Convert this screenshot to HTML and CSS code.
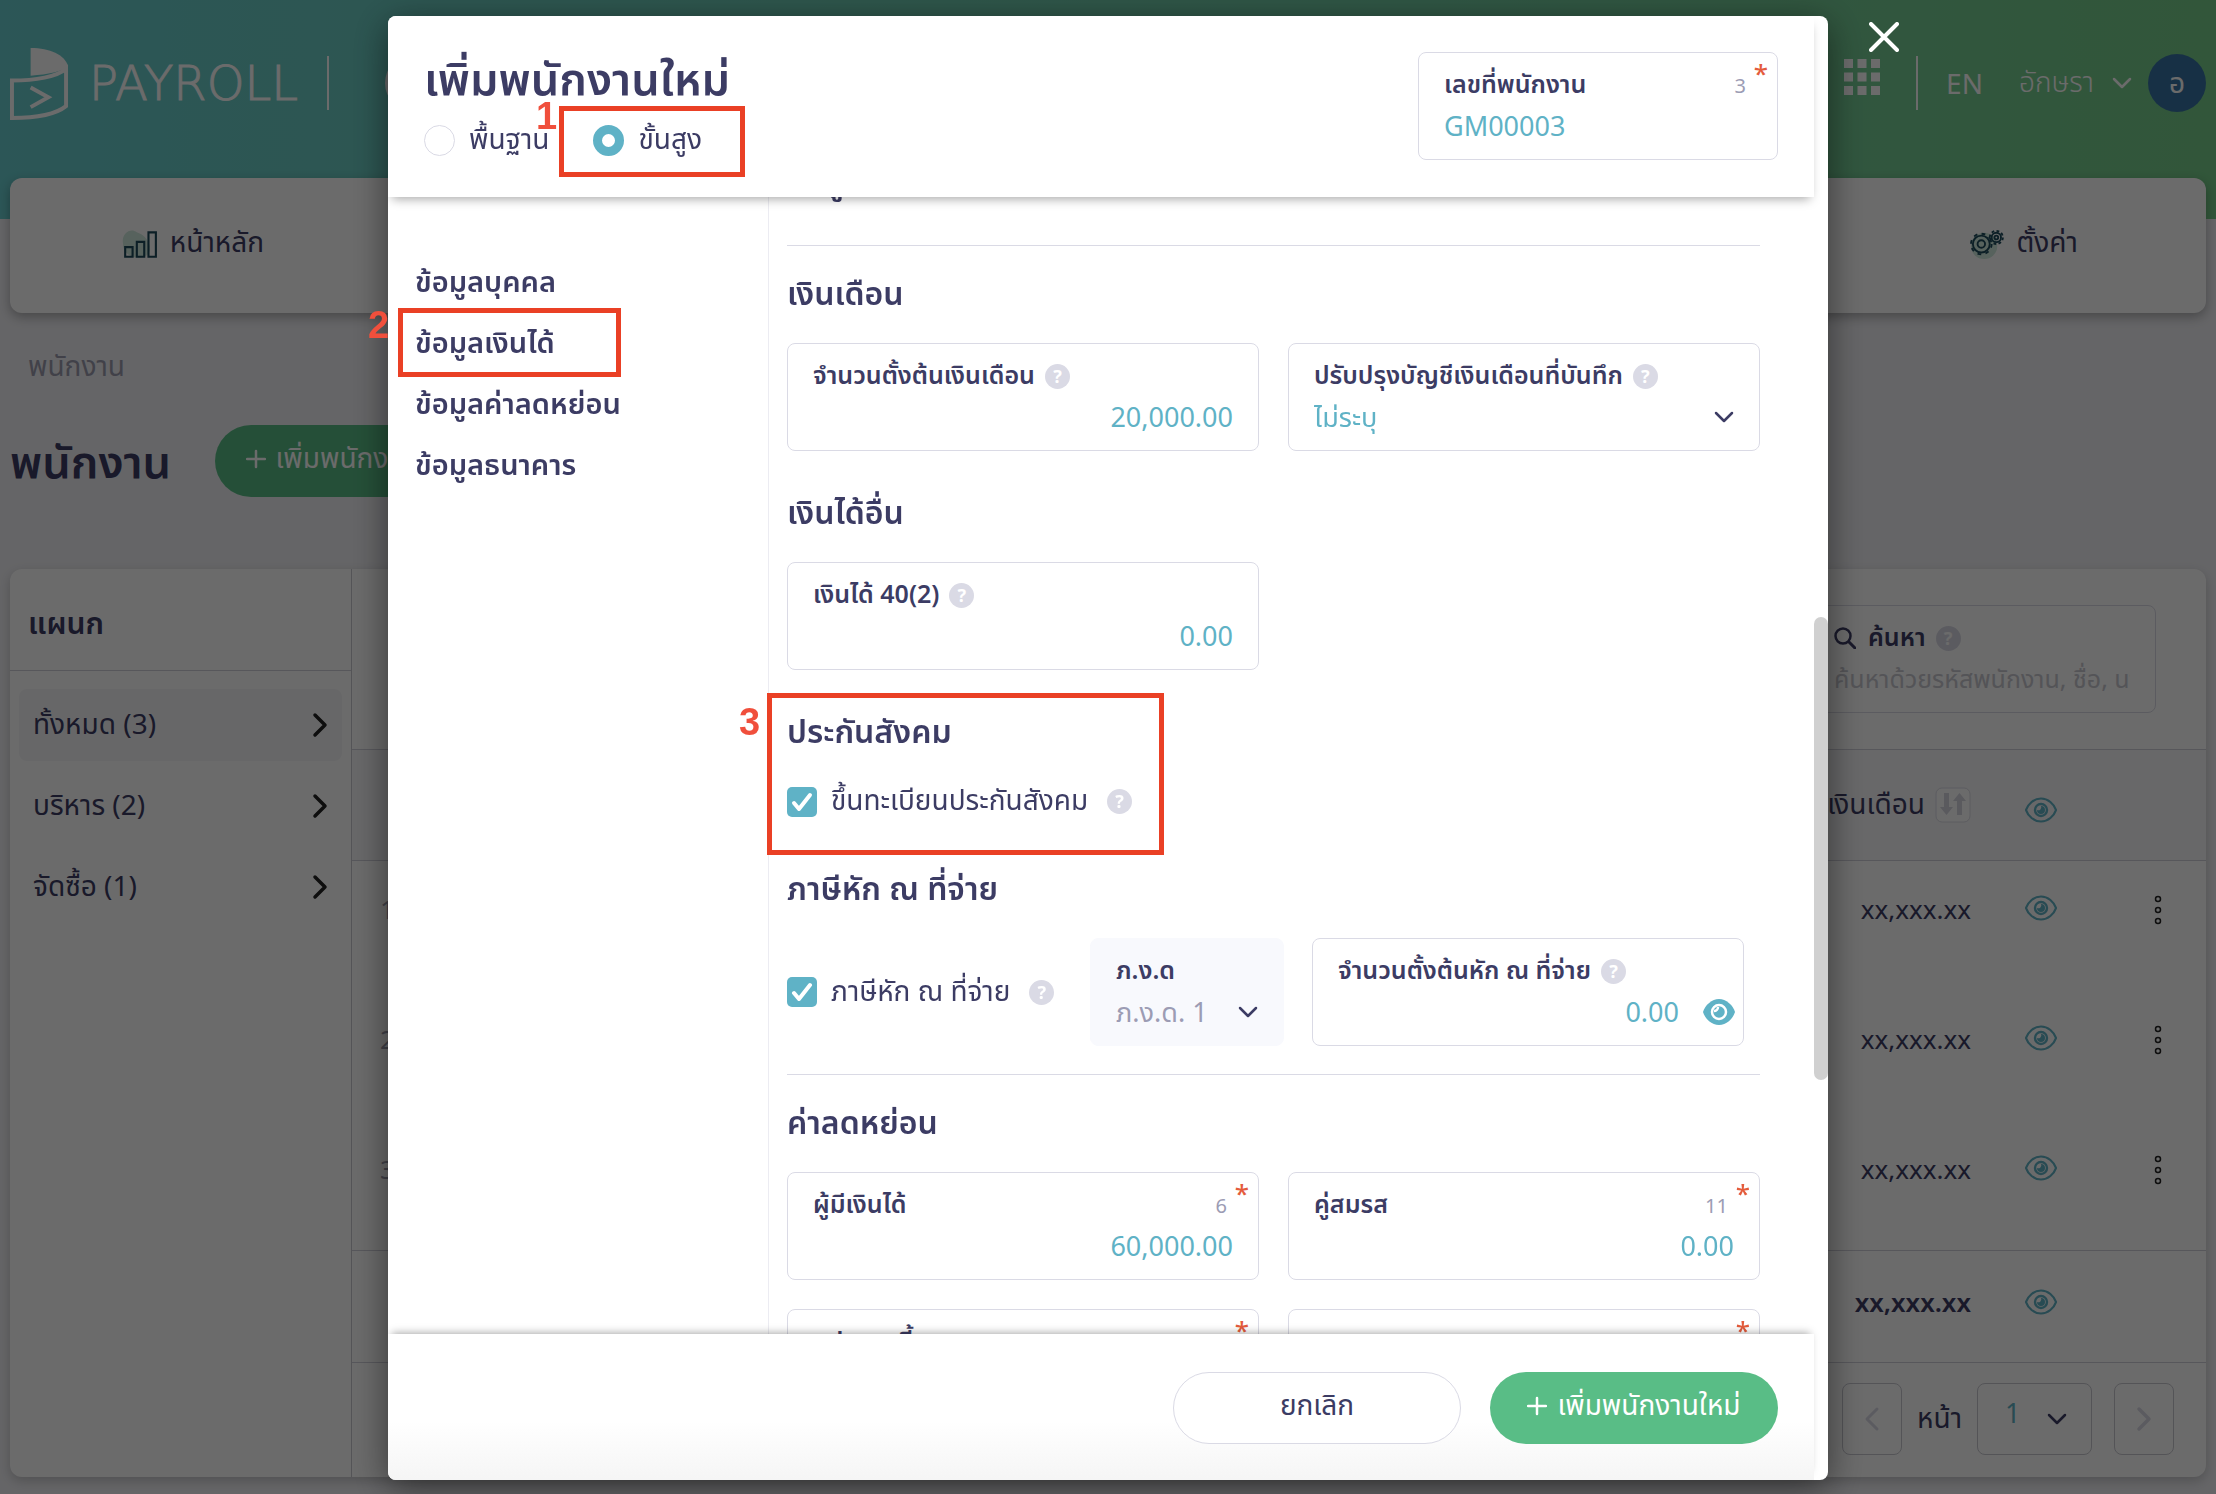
FILE: index.html
```html
<!DOCTYPE html>
<html lang="th">
<head>
    <meta charset="UTF-8">
    <meta name="viewport" content="width=device-width, initial-scale=1.0">
    <title>Payroll</title>
    <link rel="stylesheet" href="styles.css">
</head>
<body>
    <svg class="sprite" aria-hidden="true">
        <symbol id="chevron-down" viewBox="0 0 20 12"><path d="M2 2l8 8 8-8" fill="none" stroke="currentColor" stroke-width="2.500" stroke-linecap="round" stroke-linejoin="round"/></symbol>
        <symbol id="chevron-right" viewBox="0 0 16 26"><path d="M3 3l10 10L3 23" fill="none" stroke="currentColor" stroke-width="3.500" stroke-linecap="round" stroke-linejoin="round"/></symbol>
        <symbol id="chevron-left" viewBox="0 0 16 26"><path d="M13 3L3 13l10 10" fill="none" stroke="currentColor" stroke-width="3" stroke-linecap="round" stroke-linejoin="round"/></symbol>
        <symbol id="plus" viewBox="0 0 20 20"><path d="M10 2v16M1 10h18" fill="none" stroke="currentColor" stroke-width="2.500" stroke-linecap="round"/></symbol>
        <symbol id="eye" viewBox="0 0 32 26">
            <path d="M1 13C3 7 9 1.500 16 1.500S29 7 31 13C29 19 23 24.500 16 24.500S3 19 1 13z" fill="none" stroke="currentColor" stroke-width="2.200" stroke-linejoin="round"/>
            <circle cx="16" cy="13" r="6" fill="none" stroke="currentColor" stroke-width="2.400"/>
            <path d="M16 9a4 4 0 1 1-4 4a3 3 0 0 0 4-4z" fill="currentColor"/>
        </symbol>
        <symbol id="eye-solid" viewBox="0 0 32 26">
            <path d="M0 13C2 6 9 0 16 0S30 6 32 13C30 20 23 26 16 26S2 20 0 13z" fill="currentColor"/>
            <circle cx="16" cy="13" r="7" fill="none" stroke="#fff" stroke-width="2.500"/>
            <path d="M15 8a4 4 0 0 1-4 4" fill="none" stroke="#fff" stroke-width="2.500"/>
        </symbol>
        <symbol id="dots" viewBox="0 0 8 30"><g fill="none" stroke="currentColor" stroke-width="1.500"><circle cx="4" cy="4" r="2.500"/><circle cx="4" cy="15" r="2.500"/><circle cx="4" cy="26" r="2.500"/></g></symbol>
    </svg>

    <header class="topbar">
        <div class="brand">
            <svg class="brand-mark" viewBox="0 0 60 74">
                <path d="M21 1c20 0 34 7 38 18c-6 6-20 9-38 10z" fill="currentColor"/>
                <path d="M2 34c24 0 46-4 55-12v38c-10 8-28 12-55 12z" fill="none" stroke="currentColor" stroke-width="4"/>
                <path d="M21 41l18 10-18 10" fill="none" stroke="currentColor" stroke-width="4"/>
            </svg>
            <span class="brand-name">PAYROLL</span>
            <span class="separator"></span>
            <span class="company-logo"></span>
        </div>
        <div class="account">
            <svg class="apps" viewBox="0 0 36 36"><path d="M0 0h9v9H0zM13.500 0h9v9h-9zM27 0h9v9h-9zM0 13.500h9v9H0zM13.500 13.500h9v9h-9zM27 13.500h9v9h-9zM0 27h9v9H0zM13.500 27h9v9h-9zM27 27h9v9h-9z" fill="currentColor"/></svg>
            <span class="separator"></span>
            <a class="lang" href="#">EN</a>
            <a class="user" href="#">อักษรา <svg class="icon-chevron"><use href="#chevron-down"/></svg></a>
            <span class="avatar">อ</span>
        </div>
    </header>

    <nav class="main-nav">
        <a href="#">
            <svg class="nav-icon" viewBox="0 0 34 28">
                <path d="M1 14C-1 4 8-2 14 3c6 2 10 6 12 12s-2 12-10 12S1 22 1 14z" fill="#cfeadd"/>
                <path d="M3 17h7v9H3zM14 12h7v14h-7zM25 3h7v23h-7z" fill="none" stroke="#1e4a5c" stroke-width="2"/>
            </svg>
            หน้าหลัก
        </a>
        <a href="#">
            <svg class="nav-icon" viewBox="0 0 38 32">
                <circle cx="17" cy="18" r="14" fill="#cfeadd"/>
                <circle cx="14" cy="16" r="9" fill="none" stroke="#1e4a5c" stroke-width="2"/>
                <circle cx="14" cy="16" r="11" fill="none" stroke="#1e4a5c" stroke-width="2" stroke-dasharray="4 4.640"/>
                <circle cx="14" cy="16" r="4" fill="none" stroke="#1e4a5c" stroke-width="2"/>
                <circle cx="30" cy="9" r="5" fill="none" stroke="#1e4a5c" stroke-width="2"/>
                <circle cx="30" cy="9" r="7" fill="none" stroke="#1e4a5c" stroke-width="2" stroke-dasharray="3 2.500"/>
                <circle cx="30" cy="9" r="2" fill="none" stroke="#1e4a5c" stroke-width="2"/>
            </svg>
            ตั้งค่า
        </a>
    </nav>

    <main class="page">
        <p class="breadcrumb">พนักงาน</p>
        <div class="page-title">
            <h1>พนักงาน</h1>
            <button class="btn btn-primary" type="button"><svg class="icon-plus"><use href="#plus"/></svg>เพิ่มพนักงานใหม่</button>
        </div>

        <section class="card">
            <aside class="departments">
                <h2>แผนก</h2>
                <ul>
                    <li class="active"><a href="#">ทั้งหมด (3) <svg class="icon-next"><use href="#chevron-right"/></svg></a></li>
                    <li><a href="#">บริหาร (2) <svg class="icon-next"><use href="#chevron-right"/></svg></a></li>
                    <li><a href="#">จัดซื้อ (1) <svg class="icon-next"><use href="#chevron-right"/></svg></a></li>
                </ul>
            </aside>
            <div class="employees">
                <div class="toolbar">
                    <div class="field search">
                        <div class="field-head">
                            <svg class="icon-search" viewBox="0 0 22 22"><circle cx="9" cy="9" r="7.500" fill="none" stroke="currentColor" stroke-width="2.500"/><path d="M15 15l6 6" stroke="currentColor" stroke-width="3" stroke-linecap="round"/></svg>
                            <label for="search">ค้นหา</label>
                            <span class="help">?</span>
                        </div>
                        <input id="search" type="text" placeholder="ค้นหาด้วยรหัสพนักงาน, ชื่อ, นามสกุล">
                    </div>
                </div>
                <table>
                    <thead>
                        <tr>
                            <th class="col-no"></th>
                            <th class="col-salary"><span class="sortable">เงินเดือน<svg class="icon-sort" viewBox="0 0 36 36"><rect x="1" y="1" width="34" height="34" rx="6" fill="#fff" stroke="#dcdce6" stroke-width="1"/><path d="M9 6h5v14h4l-6.500 8L5 20h4zM22 28h5V14h4l-6.500-8L18 14h4z" fill="#d6d6e0"/></svg></span></th>
                            <th class="col-eye"><svg class="icon-eye"><use href="#eye"/></svg></th>
                            <th class="col-menu"></th>
                        </tr>
                    </thead>
                    <tbody>
                        <tr><td class="col-no">1</td><td class="col-salary">xx,xxx.xx</td><td class="col-eye"><svg class="icon-eye"><use href="#eye"/></svg></td><td class="col-menu"><svg class="icon-dots"><use href="#dots"/></svg></td></tr>
                        <tr><td class="col-no">2</td><td class="col-salary">xx,xxx.xx</td><td class="col-eye"><svg class="icon-eye"><use href="#eye"/></svg></td><td class="col-menu"><svg class="icon-dots"><use href="#dots"/></svg></td></tr>
                        <tr><td class="col-no">3</td><td class="col-salary">xx,xxx.xx</td><td class="col-eye"><svg class="icon-eye"><use href="#eye"/></svg></td><td class="col-menu"><svg class="icon-dots"><use href="#dots"/></svg></td></tr>
                    </tbody>
                    <tfoot>
                        <tr><td class="col-no"></td><td class="col-salary">xx,xxx.xx</td><td class="col-eye"><svg class="icon-eye"><use href="#eye"/></svg></td><td class="col-menu"></td></tr>
                    </tfoot>
                </table>
                <div class="pagination">
                    <button class="page-btn" type="button" aria-label="ก่อนหน้า"><svg class="icon-next"><use href="#chevron-left"/></svg></button>
                    <label for="page">หน้า</label>
                    <div class="page-select">
                        <select id="page"><option>1</option></select>
                        <svg class="icon-chevron"><use href="#chevron-down"/></svg>
                    </div>
                    <button class="page-btn" type="button" aria-label="ถัดไป"><svg class="icon-next"><use href="#chevron-right"/></svg></button>
                </div>
            </div>
        </section>
    </main>

    <div class="overlay">
        <div class="modal-wrap">
            <form class="modal">
                <div class="modal-header">
                    <div>
                        <h2 class="modal-title">เพิ่มพนักงานใหม่</h2>
                        <div class="radios">
                            <label><input type="radio" name="mode">พื้นฐาน</label>
                            <label><input type="radio" name="mode" checked>ขั้นสูง</label>
                        </div>
                    </div>
                    <div class="field employee-id required">
                        <div class="field-head"><label for="emp-id">เลขที่พนักงาน</label><span class="count">3</span></div>
                        <input id="emp-id" type="text" value="GM00003">
                    </div>
                </div>

                <div class="modal-body">
                    <nav class="side-nav">
                        <a href="#">ข้อมูลบุคคล</a>
                        <a href="#">ข้อมูลเงินได้</a>
                        <a href="#">ข้อมูลค่าลดหย่อน</a>
                        <a href="#">ข้อมูลธนาคาร</a>
                    </nav>
                    <div class="form-content">
                        <h3 class="scrolled">ข้อมูลเงินได้</h3>
                        <hr>
                        <section class="group">
                            <h3>เงินเดือน</h3>
                            <div class="fields">
                                <div class="field number">
                                    <div class="field-head"><label for="salary">จำนวนตั้งต้นเงินเดือน</label><span class="help">?</span></div>
                                    <input id="salary" type="text" value="20,000.00">
                                </div>
                                <div class="field">
                                    <div class="field-head"><label for="account">ปรับปรุงบัญชีเงินเดือนที่บันทึก</label><span class="help">?</span></div>
                                    <div class="select"><select id="account"><option>ไม่ระบุ</option></select><svg class="icon-chevron"><use href="#chevron-down"/></svg></div>
                                </div>
                            </div>
                        </section>
                        <section class="group">
                            <h3>เงินได้อื่น</h3>
                            <div class="fields">
                                <div class="field number">
                                    <div class="field-head"><label for="income">เงินได้ 40(2)</label><span class="help">?</span></div>
                                    <input id="income" type="text" value="0.00">
                                </div>
                            </div>
                        </section>
                        <section class="group">
                            <h3>ประกันสังคม</h3>
                            <div class="check-row">
                                <label class="check"><input type="checkbox" checked>ขึ้นทะเบียนประกันสังคม</label>
                                <span class="help">?</span>
                            </div>
                        </section>
                        <section class="group tax">
                            <h3>ภาษีหัก ณ ที่จ่าย</h3>
                            <div class="tax-row">
                                <div class="tax-check">
                                    <label class="check"><input type="checkbox" checked>ภาษีหัก ณ ที่จ่าย</label>
                                    <span class="help">?</span>
                                </div>
                                <div class="field disabled">
                                    <div class="field-head"><label for="pnd">ภ.ง.ด</label></div>
                                    <div class="select"><select id="pnd"><option>ภ.ง.ด. 1</option></select><svg class="icon-chevron"><use href="#chevron-down"/></svg></div>
                                </div>
                                <div class="field number with-eye">
                                    <div class="field-head"><label for="tax">จำนวนตั้งต้นหัก ณ ที่จ่าย</label><span class="help">?</span></div>
                                    <div class="value-row"><input id="tax" type="text" value="0.00"><svg class="icon-eye"><use href="#eye-solid"/></svg></div>
                                </div>
                            </div>
                        </section>
                        <hr>
                        <section class="group">
                            <h3>ค่าลดหย่อน</h3>
                            <div class="fields">
                                <div class="field number required">
                                    <div class="field-head"><label for="self">ผู้มีเงินได้</label><span class="count">6</span></div>
                                    <input id="self" type="text" value="60,000.00">
                                </div>
                                <div class="field number required">
                                    <div class="field-head"><label for="spouse">คู่สมรส</label><span class="count">11</span></div>
                                    <input id="spouse" type="text" value="0.00">
                                </div>
                                <div class="field number required">
                                    <div class="field-head"><label for="parents">อุปการะเลี้ยงดู</label><span class="count">11</span></div>
                                    <input id="parents" type="text" value="0.00">
                                </div>
                                <div class="field number required">
                                    <div class="field-head"><label for="child">บุตร</label><span class="count">11</span></div>
                                    <input id="child" type="text" value="0.00">
                                </div>
                            </div>
                        </section>
                    </div>
                </div>

                <div class="modal-footer">
                    <button class="btn btn-outline" type="button">ยกเลิก</button>
                    <button class="btn btn-primary" type="submit"><svg class="icon-plus"><use href="#plus"/></svg>เพิ่มพนักงานใหม่</button>
                </div>
            </form>
            <span class="scroll-thumb"></span>
            <button class="close" type="button" aria-label="ปิด"><svg viewBox="0 0 30 30"><path d="M2 2l26 26M28 2L2 28" stroke="#fff" stroke-width="4" stroke-linecap="round"/></svg></button>

            <!-- step markers -->
            <span class="step-box box-1"></span><b class="step-no no-1">1</b>
            <span class="step-box box-2"></span><b class="step-no no-2">2</b>
            <span class="step-box box-3"></span><b class="step-no no-3">3</b>
        </div>
    </div>
</body>
</html>
```

FILE: styles.css
```css
* {
    box-sizing: border-box;
}
body {
    margin: 0;
    height: 100vh;
    overflow: hidden;
    background: linear-gradient(90deg, #69cdcf, #77cd8a) no-repeat #f1f1f5;
    background-size: 100% 219px;
    color: #3c3c64;
    font-family: "Noto Sans", "Noto Sans Thai", sans-serif;
    font-size: 28px;
}
h1, h2, h3, p, ul {
    margin: 0;
    padding: 0;
}
a {
    color: inherit;
    text-decoration: none;
}
button, input, select {
    font: inherit;
    color: inherit;
}
svg {
    display: block;
    flex: none;
}
.sprite {
    display: none;
}

/* icons */
.icon-chevron {
    width: 20px;
    height: 12px;
}
.icon-next {
    width: 16px;
    height: 26px;
}
.icon-plus {
    width: 20px;
    height: 20px;
}
.icon-eye {
    width: 32px;
    height: 26px;
    color: #5fb2c6;
}
.icon-dots {
    width: 8px;
    height: 30px;
    color: #222;
}
.icon-search {
    width: 22px;
    height: 22px;
    margin-right: 12px;
}
.icon-sort {
    width: 36px;
    height: 36px;
}
.help {
    flex: none;
    width: 25px;
    height: 25px;
    margin-left: 10px;
    border-radius: 50%;
    background: #dadae5;
    color: #fff;
    font-size: 18px;
    font-weight: bold;
    line-height: 25px;
    text-align: center;
}

/* top bar */
.topbar {
    display: flex;
    justify-content: space-between;
    height: 178px;
    padding: 47px 10px 0;
    color: #fff;
}
.brand, .account, .user {
    display: flex;
    align-items: center;
}
.brand, .account {
    height: 72px;
}
.brand-mark {
    width: 59px;
    height: 73px;
}
.brand-name {
    width: 238px;
    margin-left: 20px;
    font-family: "DejaVu Sans", sans-serif;
    font-size: 48px;
    font-weight: 200;
    -webkit-text-stroke: 1px #fff;
}
.separator {
    width: 2px;
    height: 54px;
    background: #fff;
}
.company-logo {
    width: 58px;
    height: 58px;
    margin-left: 56px;
    border-radius: 50%;
    background: #fff;
}
.apps {
    width: 36px;
    height: 36px;
    margin: 0 36px 12px 0;
}
.lang {
    margin: 0 36px 0 28px;
}
.user {
    gap: 18px;
    margin-right: 16px;
    font-weight: 300;
}
.avatar {
    width: 58px;
    height: 58px;
    border-radius: 50%;
    background: #3874a4;
    line-height: 56px;
    text-align: center;
}
.main-nav {
    display: flex;
    justify-content: space-between;
    height: 135px;
    margin: 0 10px;
    border-radius: 12px;
    background: #fff;
    box-shadow: 0 4px 12px rgba(0, 0, 0, 0.3);
}
.main-nav a {
    display: flex;
    flex: 0 0 16.66%;
    align-items: center;
    justify-content: center;
    gap: 12px;
    padding-bottom: 4px;
}
.nav-icon {
    width: 36px;
    height: 30px;
}

/* page */
.page {
    padding: 31px 10px 0;
}
.breadcrumb {
    height: 42px;
    padding-left: 18px;
    color: #9c9cae;
    line-height: 42px;
}
.page-title {
    display: flex;
    align-items: center;
    gap: 44px;
    margin: 39px 0 72px;
}
.page-title .btn {
    width: 274px;
}
h1 {
    font-size: 45px;
    font-weight: 600;
    line-height: 68px;
}
.btn {
    display: flex;
    align-items: center;
    justify-content: center;
    gap: 10px;
    width: 288px;
    height: 72px;
    padding: 0 0 4px;
    border: none;
    border-radius: 36px;
}
.btn-primary {
    background: #59bd86;
    color: #fff;
}
.btn-outline {
    border: 1px solid #dadae5;
    background: #fff;
}
.card {
    display: flex;
    height: 908px;
    border-radius: 12px;
    background: #fff;
    box-shadow: 0 4px 12px rgba(0, 0, 0, 0.2);
}
.departments {
    flex: none;
    width: 342px;
    border-right: 1px solid #c8c8d0;
}
.departments h2 {
    height: 102px;
    padding: 0 18px;
    border-bottom: 1px solid #d0d0da;
    font-size: 30px;
    font-weight: 600;
    line-height: 108px;
}
.departments ul {
    display: flex;
    flex-direction: column;
    gap: 9px;
    padding: 18px 9px;
    list-style: none;
}
.departments li a {
    display: flex;
    align-items: center;
    justify-content: space-between;
    height: 72px;
    padding: 0 14px;
    border-radius: 8px;
}
.departments .active a {
    background: #f6f6f8;
}
.departments .icon-next {
    color: #222;
}
.employees {
    flex: 1;
}
.toolbar {
    display: flex;
    justify-content: flex-end;
    height: 180px;
    padding: 36px 50px 0 0;
}
.search {
    width: 348px;
}
table {
    width: 100%;
    border-collapse: collapse;
    table-layout: fixed;
}
th, td {
    height: 130px;
    padding: 0;
    font-weight: 400;
    text-align: left;
    vertical-align: top;
}
th {
    height: 111px;
    border-top: 1px solid #d0d0da;
    border-bottom: 1px solid #d0d0da;
    background: #f7f7f9;
    vertical-align: middle;
}
td {
    font-size: 26px;
}
tbody td {
    padding-top: 30px;
}
tfoot td {
    height: 112px;
    padding-bottom: 10px;
    border-top: 1px solid #d0d0da;
    border-bottom: 1px solid #d0d0da;
    font-weight: 600;
    vertical-align: middle;
}
tbody svg {
    margin-top: 4px;
}
th .icon-eye {
    margin-top: 10px;
}
.col-no {
    width: 100px;
    padding-left: 28px;
    color: #9c9cae;
}
.col-salary {
    text-align: right;
}
.sortable {
    display: flex;
    align-items: center;
    justify-content: flex-end;
    gap: 10px;
}
.col-eye {
    width: 183px;
    padding-left: 54px;
}
.col-menu {
    width: 52px;
}
.pagination {
    display: flex;
    align-items: center;
    justify-content: flex-end;
    padding: 20px 32px;
}
.pagination label {
    margin: 0 15px;
}
.page-btn, .page-select {
    height: 72px;
    border: 1px solid #c8c8d0;
    border-radius: 8px;
    background: #fff;
}
.page-btn {
    display: flex;
    align-items: center;
    justify-content: center;
    width: 60px;
    color: #dadae5;
}
.page-select {
    display: flex;
    align-items: center;
    width: 115px;
    margin-right: 22px;
    padding: 0 24px 0 27px;
}
.page-select select {
    height: 54px;
    padding-bottom: 14px;
}

/* fields */
.field {
    position: relative;
    height: 108px;
    padding: 12px 25px 0;
    border: 1px solid #dadae5;
    border-radius: 8px;
    background: #fff;
}
.field-head {
    display: flex;
    align-items: center;
    height: 40px;
    font-size: 25px;
    font-weight: 600;
    white-space: nowrap;
}
input[type="text"], select {
    width: 100%;
    min-width: 0;
    height: 42px;
    padding: 0 0 2px;
    border: none;
    outline: none;
    background: none;
    color: #5fb2c6;
    font-size: 27px;
    appearance: none;
}
input::placeholder {
    color: #c8c8d0;
}
#search {
    font-size: 25px;
}
.number input {
    text-align: right;
}
.select, .value-row {
    display: flex;
    align-items: center;
}
.disabled {
    border-color: #f8f9fd;
    background: #f8f9fd;
}
.disabled select {
    color: #9c9cb4;
    opacity: 1;
}
.count {
    margin-left: auto;
    padding-right: 6px;
    color: #9c9cb4;
    font-size: 20px;
    font-weight: 400;
}
.required::after {
    content: "*";
    position: absolute;
    top: 2px;
    right: 9px;
    color: #e45c3c;
    font-size: 26px;
    font-weight: 500;
}

/* modal */
.overlay {
    position: fixed;
    inset: 0;
    padding: 16px 0 14px;
    background: rgba(0, 0, 0, 0.58);
}
.modal-wrap {
    position: relative;
    width: 1440px;
    max-width: 100%;
    height: 100%;
    margin: 0 auto;
}
.modal {
    display: flex;
    flex-direction: column;
    height: 100%;
    border-radius: 8px;
    background: #fff;
    box-shadow: 0 8px 36px rgba(0, 0, 0, 0.5);
    overflow: hidden;
}
.modal-header, .modal-footer {
    position: relative;
    display: flex;
    flex: none;
    margin-right: 14px;
    background: #fff;
}
.modal-header {
    justify-content: space-between;
    height: 181px;
    padding: 36px 36px 0;
    box-shadow: 0 6px 10px -4px rgba(0, 0, 0, 0.35);
    z-index: 1;
}
.modal-title {
    font-size: 45px;
    font-weight: 600;
    line-height: 52px;
}
.radios {
    display: flex;
    gap: 44px;
    padding-top: 15px;
}
.radios label, .check {
    display: flex;
    align-items: center;
    gap: 14px;
    white-space: nowrap;
}
input[type="radio"] {
    width: 31px;
    height: 31px;
    margin: 0;
    border: 1px solid #dadae5;
    border-radius: 50%;
    background: #fff;
    appearance: none;
}
input[type="radio"]:checked {
    border: 9px solid #5fb2c6;
}
.employee-id {
    width: 360px;
}
.modal-body {
    display: flex;
    flex: 1;
    min-height: 0;
    overflow: hidden;
}
.side-nav {
    display: flex;
    flex: none;
    flex-direction: column;
    width: 381px;
    padding: 53px 27px 0;
    border-right: 1px solid #ececf2;
}
.side-nav a {
    height: 61px;
    font-size: 29px;
    font-weight: 600;
    line-height: 61px;
    white-space: nowrap;
}
.form-content {
    flex: 1;
    padding: 0 68px 0 18px;
}
h3 {
    height: 97px;
    font-size: 32px;
    font-weight: 600;
    line-height: 94px;
}
.scrolled {
    margin: -63px 0 14px;
}
hr {
    height: 1px;
    margin: 0;
    border: none;
    background: #dadae5;
}
.group {
    margin-bottom: 14px;
}
.fields {
    display: grid;
    grid-template-columns: 1fr 1fr;
    gap: 29px;
}
.check-row, .tax-check {
    display: flex;
    align-items: center;
    gap: 9px;
}
.check-row {
    height: 46px;
    padding-bottom: 5px;
}
.tax {
    margin-bottom: 28px;
}
.tax-row {
    display: flex;
    gap: 28px;
    padding-right: 16px;
}
.tax-check {
    flex: 0 0 275px;
}
.tax-row .disabled {
    flex: 0 0 194px;
}
.tax-row .with-eye {
    flex: 1;
    padding-right: 8px;
}
.value-row {
    gap: 24px;
}
input[type="checkbox"] {
    width: 30px;
    height: 30px;
    margin: 0;
    border-radius: 5px;
    background: url("data:image/svg+xml,%3Csvg xmlns='http://www.w3.org/2000/svg' viewBox='0 0 30 30'%3E%3Cpath d='M7 16l5 6L23 8' fill='none' stroke='white' stroke-width='4' stroke-linecap='round' stroke-linejoin='round'/%3E%3C/svg%3E") #5fb2c6;
    appearance: none;
}
.modal-footer {
    justify-content: flex-end;
    gap: 29px;
    height: 146px;
    padding: 38px 36px 0;
    background: linear-gradient(#fff 60%, #f5f5f5);
    box-shadow: 0 -5px 8px -4px rgba(0, 0, 0, 0.35);
}
.scroll-thumb {
    position: absolute;
    top: 601px;
    right: 0;
    width: 14px;
    height: 463px;
    border-radius: 7px;
    background: #d0d0d0;
}
.close {
    position: absolute;
    top: 6px;
    right: -71px;
    width: 30px;
    height: 30px;
    padding: 0;
    border: none;
    background: none;
}

/* step markers lie over the modal */
.step-box, .step-no {
    position: absolute;
    z-index: 2;
}
.step-box {
    border: 5px solid #ea4025;
}
.step-no {
    color: #f04f3c;
    font-family: "Liberation Sans", sans-serif;
    font-size: 38px;
    font-weight: 700;
    line-height: 38px;
}
.box-1 {
    top: 90px;
    left: 171px;
    width: 186px;
    height: 71px;
}
.box-2 {
    top: 292px;
    left: 10px;
    width: 223px;
    height: 69px;
}
.box-3 {
    top: 677px;
    left: 379px;
    width: 397px;
    height: 162px;
}
.no-1 {
    top: 81px;
    left: 148px;
}
.no-2 {
    top: 290px;
    left: -20px;
}
.no-3 {
    top: 687px;
    left: 351px;
}
```
